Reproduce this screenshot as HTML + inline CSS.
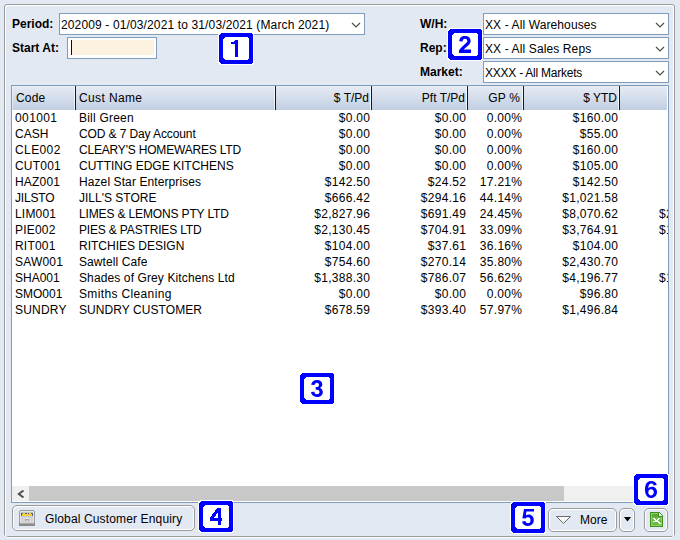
<!DOCTYPE html>
<html><head><meta charset="utf-8">
<style>
*{margin:0;padding:0;box-sizing:border-box}
html,body{width:680px;height:540px;overflow:hidden;background:#E3E9F3;font-family:"Liberation Sans",sans-serif;font-size:12px;color:#000}
.abs{position:absolute}
.panel{position:absolute;left:4px;top:4px;width:671px;height:533px;border:1px solid #9A9A9A;border-radius:3px}
.panelhi{position:absolute;left:5px;top:5px;width:669px;height:533px;border:1px solid #fff;border-radius:3px}
.lbl{position:absolute;font-weight:bold;font-size:12px;line-height:14px}
.combo{position:absolute;height:22px;background:#fff;border:1px solid #7F9DB9}
.combo .t{position:absolute;left:1px;top:4px;line-height:14px;white-space:nowrap}
.combo .chev{position:absolute;right:3px;top:8px}
.start{position:absolute;left:67px;top:37px;width:90px;height:22px;border:1px solid #7F9DB9;background:#fff}
.start .fill{position:absolute;left:4px;top:2px;right:2px;bottom:3px;background:#FDF2DF}
.start .caret{position:absolute;left:3px;top:2px;width:1px;height:15px;background:#0A0F1E}
.tbl{position:absolute;left:11px;top:85px;width:658px;height:418px;border:1px solid #7F9DB9;background:#fff;overflow:hidden}
.hdr{position:absolute;left:0;top:0;width:655px;height:24px;background:linear-gradient(#E6EBF4,#C1CFE2)}
.sep{position:absolute;top:0;width:1px;height:24px;background:#141A22;box-shadow:-1px 0 0 rgba(255,255,255,0.7)}
.h{position:absolute;top:86px;line-height:24px;white-space:nowrap}
.c{position:absolute;line-height:16px;white-space:nowrap}
.r{text-align:right}
.n{letter-spacing:0.3px;margin-right:-0.3px}
.badge{position:absolute}
.badge svg{position:absolute;left:0;top:0}
.badge span{position:absolute;left:0;top:0;width:34px;line-height:31px;text-align:center;font-weight:bold;font-size:23px;color:#0000FF}
.btn{position:absolute;border:1px solid #9A9A9A;border-radius:5px;background:#E3E9F3;box-shadow:inset 1px 1px 0 #fff, inset -1px -1px 0 #fff}
</style></head><body>
<div class="panel"></div>
<div class="panelhi"></div>

<div class="lbl" style="left:12px;top:17px">Period:</div>
<div class="combo" style="left:59px;top:13px;width:306px"><span class="t" style="letter-spacing:0.133px">202009 - 01/03/2021 to 31/03/2021 (March 2021)</span><svg class="chev" width="10" height="6" viewBox="0 0 10 6"><path d="M1 1L5 5L9 1" fill="none" stroke="#4A4A4A" stroke-width="1.15"/></svg></div>
<div class="lbl" style="left:12px;top:41px">Start At:</div>
<div class="start"><div class="fill"></div><div class="caret"></div></div>

<div class="lbl" style="left:420px;top:17px">W/H:</div>
<div class="combo" style="left:483px;top:13px;width:186px"><span class="t" style="letter-spacing:0.11px">XX - All Warehouses</span><svg class="chev" width="10" height="6" viewBox="0 0 10 6"><path d="M1 1L5 5L9 1" fill="none" stroke="#4A4A4A" stroke-width="1.15"/></svg></div>
<div class="lbl" style="left:420px;top:41px">Rep:</div>
<div class="combo" style="left:483px;top:37px;width:186px"><span class="t" style="letter-spacing:0.12px">XX - All Sales Reps</span><svg class="chev" width="10" height="6" viewBox="0 0 10 6"><path d="M1 1L5 5L9 1" fill="none" stroke="#4A4A4A" stroke-width="1.15"/></svg></div>
<div class="lbl" style="left:420px;top:65px">Market:</div>
<div class="combo" style="left:483px;top:61px;width:186px"><span class="t" style="letter-spacing:-0.24px">XXXX - All Markets</span><svg class="chev" width="10" height="6" viewBox="0 0 10 6"><path d="M1 1L5 5L9 1" fill="none" stroke="#4A4A4A" stroke-width="1.15"/></svg></div>

<div class="tbl">
 <div class="hdr"></div>
 <div class="abs" style="left:0;top:0;width:1px;height:24px;background:rgba(255,255,255,0.45)"></div>
 <div class="sep" style="left:63px"></div>
 <div class="sep" style="left:263px"></div>
 <div class="sep" style="left:359px"></div>
 <div class="sep" style="left:455px"></div>
 <div class="sep" style="left:511px"></div>
 <div class="sep" style="left:607px"></div>
 <div class="abs" style="left:0;top:400px;width:656px;height:15px;background:#F0F0F0"></div>
 <div class="abs" style="left:17px;top:400px;width:535px;height:15px;background:#C8C8C8"></div>
 <svg class="abs" style="left:5px;top:404px" width="8" height="8" viewBox="0 0 8 8"><path d="M6.5,0.5L1.8,4L6.5,7.5" fill="none" stroke="#505050" stroke-width="2"/></svg>
</div>
<div class="h" style="left:16px;letter-spacing:0.2px">Code</div>
<div class="h" style="left:79px;letter-spacing:0.375px">Cust Name</div>
<div class="h r" style="right:311px">$ T/Pd</div>
<div class="h r" style="right:215px">Pft T/Pd</div>
<div class="h r" style="right:160px;letter-spacing:0.25px;margin-right:-0.25px">GP %</div>
<div class="h r" style="right:63px">$ YTD</div>
<div class="c l" style="left:15px;top:110px;letter-spacing:0.400px">001001</div><div class="c l" style="left:79px;top:110px;letter-spacing:0.222px">Bill Green</div><div class="c r n" style="right:310px;top:110px">$0.00</div><div class="c r n" style="right:214px;top:110px">$0.00</div><div class="c r n" style="right:158px;top:110px">0.00%</div><div class="c r n" style="right:62px;top:110px">$160.00</div>
<div class="c l" style="left:15px;top:126px;letter-spacing:0.000px">CASH</div><div class="c l" style="left:79px;top:126px;letter-spacing:-0.111px">COD &amp; 7 Day Account</div><div class="c r n" style="right:310px;top:126px">$0.00</div><div class="c r n" style="right:214px;top:126px">$0.00</div><div class="c r n" style="right:158px;top:126px">0.00%</div><div class="c r n" style="right:62px;top:126px">$55.00</div>
<div class="c l" style="left:15px;top:142px;letter-spacing:0.400px">CLE002</div><div class="c l" style="left:79px;top:142px;letter-spacing:-0.190px">CLEARY'S HOMEWARES LTD</div><div class="c r n" style="right:310px;top:142px">$0.00</div><div class="c r n" style="right:214px;top:142px">$0.00</div><div class="c r n" style="right:158px;top:142px">0.00%</div><div class="c r n" style="right:62px;top:142px">$160.00</div>
<div class="c l" style="left:15px;top:158px;letter-spacing:0.200px">CUT001</div><div class="c l" style="left:79px;top:158px;letter-spacing:0.000px">CUTTING EDGE KITCHENS</div><div class="c r n" style="right:310px;top:158px">$0.00</div><div class="c r n" style="right:214px;top:158px">$0.00</div><div class="c r n" style="right:158px;top:158px">0.00%</div><div class="c r n" style="right:62px;top:158px">$105.00</div>
<div class="c l" style="left:15px;top:174px;letter-spacing:0.200px">HAZ001</div><div class="c l" style="left:79px;top:174px;letter-spacing:0.095px">Hazel Star Enterprises</div><div class="c r n" style="right:310px;top:174px">$142.50</div><div class="c r n" style="right:214px;top:174px">$24.52</div><div class="c r n" style="right:158px;top:174px">17.21%</div><div class="c r n" style="right:62px;top:174px">$142.50</div>
<div class="c l" style="left:15px;top:190px;letter-spacing:-0.200px">JILSTO</div><div class="c l" style="left:79px;top:190px;letter-spacing:0.000px">JILL'S STORE</div><div class="c r n" style="right:310px;top:190px">$666.42</div><div class="c r n" style="right:214px;top:190px">$294.16</div><div class="c r n" style="right:158px;top:190px">44.14%</div><div class="c r n" style="right:62px;top:190px">$1,021.58</div>
<div class="c l" style="left:15px;top:206px;letter-spacing:0.200px">LIM001</div><div class="c l" style="left:79px;top:206px;letter-spacing:-0.143px">LIMES &amp; LEMONS PTY LTD</div><div class="c r n" style="right:310px;top:206px">$2,827.96</div><div class="c r n" style="right:214px;top:206px">$691.49</div><div class="c r n" style="right:158px;top:206px">24.45%</div><div class="c r n" style="right:62px;top:206px">$8,070.62</div><div class="abs" style="left:620px;top:206px;width:48px;height:16px;overflow:hidden"><div class="c l n" style="left:39px;top:0">$2,000.00</div></div>
<div class="c l" style="left:15px;top:222px;letter-spacing:0.200px">PIE002</div><div class="c l" style="left:79px;top:222px;letter-spacing:-0.167px">PIES &amp; PASTRIES LTD</div><div class="c r n" style="right:310px;top:222px">$2,130.45</div><div class="c r n" style="right:214px;top:222px">$704.91</div><div class="c r n" style="right:158px;top:222px">33.09%</div><div class="c r n" style="right:62px;top:222px">$3,764.91</div><div class="abs" style="left:620px;top:222px;width:48px;height:16px;overflow:hidden"><div class="c l n" style="left:39px;top:0">$1,000.00</div></div>
<div class="c l" style="left:15px;top:238px;letter-spacing:0.200px">RIT001</div><div class="c l" style="left:79px;top:238px;letter-spacing:0.000px">RITCHIES DESIGN</div><div class="c r n" style="right:310px;top:238px">$104.00</div><div class="c r n" style="right:214px;top:238px">$37.61</div><div class="c r n" style="right:158px;top:238px">36.16%</div><div class="c r n" style="right:62px;top:238px">$104.00</div>
<div class="c l" style="left:15px;top:254px;letter-spacing:0.200px">SAW001</div><div class="c l" style="left:79px;top:254px;letter-spacing:0.091px">Sawtell Cafe</div><div class="c r n" style="right:310px;top:254px">$754.60</div><div class="c r n" style="right:214px;top:254px">$270.14</div><div class="c r n" style="right:158px;top:254px">35.80%</div><div class="c r n" style="right:62px;top:254px">$2,430.70</div>
<div class="c l" style="left:15px;top:270px;letter-spacing:0.000px">SHA001</div><div class="c l" style="left:79px;top:270px;letter-spacing:0.115px">Shades of Grey Kitchens Ltd</div><div class="c r n" style="right:310px;top:270px">$1,388.30</div><div class="c r n" style="right:214px;top:270px">$786.07</div><div class="c r n" style="right:158px;top:270px">56.62%</div><div class="c r n" style="right:62px;top:270px">$4,196.77</div><div class="abs" style="left:620px;top:270px;width:48px;height:16px;overflow:hidden"><div class="c l n" style="left:39px;top:0">$1,000.00</div></div>
<div class="c l" style="left:15px;top:286px;letter-spacing:0.000px">SMO001</div><div class="c l" style="left:79px;top:286px;letter-spacing:0.357px">Smiths Cleaning</div><div class="c r n" style="right:310px;top:286px">$0.00</div><div class="c r n" style="right:214px;top:286px">$0.00</div><div class="c r n" style="right:158px;top:286px">0.00%</div><div class="c r n" style="right:62px;top:286px">$96.80</div>
<div class="c l" style="left:15px;top:302px;letter-spacing:0.200px">SUNDRY</div><div class="c l" style="left:79px;top:302px;letter-spacing:0.071px">SUNDRY CUSTOMER</div><div class="c r n" style="right:310px;top:302px">$678.59</div><div class="c r n" style="right:214px;top:302px">$393.40</div><div class="c r n" style="right:158px;top:302px">57.97%</div><div class="c r n" style="right:62px;top:302px">$1,496.84</div>

<div class="btn" style="left:12px;top:505px;width:183px;height:26px"></div>
<svg class="abs" style="left:19px;top:510px" width="16" height="16" viewBox="0 0 16 16" shape-rendering="crispEdges">
 <path d="M1,0H15V1H16V16H0V1H1Z" fill="#9C9C9C"/>
 <rect x="1" y="1" width="14" height="14" fill="#E4E4E4"/>
 <rect x="2" y="2" width="12" height="1" fill="#C4C4C4"/>
 <rect x="2" y="3" width="12" height="3" fill="#56617A"/>
 <path d="M3,6V4H4V3H6V4H8V3H9V4H10V3H12V4H13V6Z" fill="#F3D338"/><rect x="9" y="4" width="1" height="1" fill="#E8A030"/>
 <rect x="2" y="6" width="12" height="1" fill="#BCCADF"/>
 <rect x="2" y="7" width="12" height="6" fill="#D4D4D4"/>
 <path d="M6,11V9H7V8H9V9H10V11H9V10H7V11Z" fill="#AAAAAA"/>
 <rect x="6" y="8" width="4" height="1" fill="#E6E6E6"/>
 <rect x="0" y="13" width="16" height="3" fill="#8A8A8A"/>
 <rect x="1" y="13" width="14" height="1" fill="#A8A8A8"/>
</svg>
<div class="c" style="left:45px;top:511px;letter-spacing:0.14px">Global Customer Enquiry</div>

<div class="btn" style="left:548px;top:508px;width:69px;height:24px"></div>
<svg class="abs" style="left:555px;top:515px" width="17" height="10" viewBox="0 0 17 10">
 <defs><linearGradient id="tg" x1="0" y1="0" x2="0" y2="1"><stop offset="0" stop-color="#FFFFFF"/><stop offset="1" stop-color="#E8E8E8"/></linearGradient></defs>
 <path d="M1.5,1.5H15.5L8.5,8.5Z" fill="url(#tg)" stroke="#6A6A6A" stroke-width="1" stroke-linejoin="miter"/>
</svg>
<div class="c" style="left:580px;top:512px">More</div>
<div class="btn" style="left:619px;top:508px;width:16px;height:24px"></div>
<svg class="abs" style="left:624px;top:517px" width="7" height="5" viewBox="0 0 7 5"><path d="M0,0H7L3.5,4.5Z" fill="#000"/></svg>
<div class="btn" style="left:644px;top:508px;width:24px;height:24px"></div>
<svg class="abs" style="left:650px;top:512px" width="13" height="15" viewBox="0 0 13 15" shape-rendering="crispEdges">
 <path d="M0,0H9L13,4V15H0Z" fill="#3E8D1F"/>
 <path d="M1,1H8.6L12,4.4V14H1Z" fill="#8DD262"/>
 <path d="M2,2H8V4H11V13H2Z" fill="#6CBB43"/>
 <rect x="2" y="2" width="6" height="3" fill="#5DA836"/>
 <path d="M8,1H9L12,4V5H8Z" fill="#3E8D1F"/>
 <path d="M9,1L12,4H9Z" fill="#F4F4F4"/>
 <path d="M3,6H5V7H6V8H7V7H8V6H10V7H9V8H8V9H9V10H10V11H11V12H9V11H8V10H3V9H5V8H4V7H3Z" fill="#fff"/>
</svg>

<svg class="badge" style="left:218px;top:32px" width="36" height="33" viewBox="-1 -1 36 33"><path d="M1 -1H33L35 1V30L33 32H1L-1 30V1Z" fill="#fff" shape-rendering="crispEdges"/><path d="M2 0H32L34 2V29L32 31H2L0 29V2Z" fill="#0000FF" shape-rendering="crispEdges"/><path d="M6 4H28L30 6V25L28 27H6L4 25V6Z" fill="#fff" shape-rendering="crispEdges"/><g transform="translate(11,7)"><path d="M5,0H8V17H5Z M1,2H5V4H1Z M4,1H5V2H4Z" fill="#0000FF" shape-rendering="crispEdges"/></g></svg>
<svg class="badge" style="left:447px;top:28px" width="36" height="33" viewBox="-1 -1 36 33"><path d="M1 -1H33L35 1V30L33 32H1L-1 30V1Z" fill="#fff" shape-rendering="crispEdges"/><path d="M2 0H32L34 2V29L32 31H2L0 29V2Z" fill="#0000FF" shape-rendering="crispEdges"/><path d="M6 4H28L30 6V25L28 27H6L4 25V6Z" fill="#fff" shape-rendering="crispEdges"/><g transform="translate(11,7)"><path d="M0.3,5.3 C0.4,1.8 2.6,0 6,0 C9.4,0 11.6,2 11.6,4.9 C11.6,7 10.5,8.3 8.3,10.2 L4.6,13.6 H12 V17 H0 V14.3 C0.4,13.4 1.6,12 3.9,9.9 C7.3,6.8 8.3,6.2 8.3,4.9 C8.3,3.6 7.3,2.7 6,2.7 C4.5,2.7 3.6,3.7 3.5,5.6 Z" fill="#0000FF"/></g></svg>
<svg class="badge" style="left:299px;top:372px" width="36" height="33" viewBox="-1 -1 36 33"><path d="M1 -1H33L35 1V30L33 32H1L-1 30V1Z" fill="#fff" shape-rendering="crispEdges"/><path d="M2 0H32L34 2V29L32 31H2L0 29V2Z" fill="#0000FF" shape-rendering="crispEdges"/><path d="M6 4H28L30 6V25L28 27H6L4 25V6Z" fill="#fff" shape-rendering="crispEdges"/><g transform="translate(11,7)"><path d="M0.2,4.8 C0.6,1.7 2.8,0 6,0 C9.3,0 11.3,1.9 11.3,4.3 C11.3,6 10.3,7.3 8.9,8.1 C10.7,8.7 11.8,10.2 11.8,12.2 C11.8,15.1 9.4,17 6,17 C2.6,17 0.3,15.2 0,12.1 L3.3,11.8 C3.5,13.5 4.5,14.3 6,14.3 C7.5,14.3 8.5,13.3 8.5,12 C8.5,10.6 7.5,9.7 5.8,9.7 H4.7 V7.1 H5.7 C7.2,7.1 8,6.3 8,5 C8,3.7 7.2,2.7 6,2.7 C4.7,2.7 3.7,3.6 3.5,5.1 Z" fill="#0000FF"/></g></svg>
<svg class="badge" style="left:198px;top:500px" width="36" height="33" viewBox="-1 -1 36 33"><path d="M1 -1H33L35 1V30L33 32H1L-1 30V1Z" fill="#fff" shape-rendering="crispEdges"/><path d="M2 0H32L34 2V29L32 31H2L0 29V2Z" fill="#0000FF" shape-rendering="crispEdges"/><path d="M6 4H28L30 6V25L28 27H6L4 25V6Z" fill="#fff" shape-rendering="crispEdges"/><g transform="translate(11,7)"><path fill-rule="evenodd" d="M7,0H11V10H12V13H11V17H8V13H0V10Z M8,4.5V10H3.6Z" fill="#0000FF" shape-rendering="crispEdges"/></g></svg>
<svg class="badge" style="left:510px;top:501px" width="36" height="33" viewBox="-1 -1 36 33"><path d="M1 -1H33L35 1V30L33 32H1L-1 30V1Z" fill="#fff" shape-rendering="crispEdges"/><path d="M2 0H32L34 2V29L32 31H2L0 29V2Z" fill="#0000FF" shape-rendering="crispEdges"/><path d="M6 4H28L30 6V25L28 27H6L4 25V6Z" fill="#fff" shape-rendering="crispEdges"/><g transform="translate(11,7)"><path d="M2,0 H12 V2.4 H4.4 L3.9,6.4 C4.7,5.9 5.7,5.6 6.7,5.6 C9.8,5.6 11.8,8 11.8,11.1 C11.8,14.6 9.4,17 6,17 C2.8,17 0.5,15.2 0.1,12.4 L3.4,12.1 C3.7,13.5 4.7,14.3 6,14.3 C7.5,14.3 8.5,13 8.5,11.2 C8.5,9.4 7.5,8.3 6,8.3 C5,8.3 4.1,8.8 3.5,9.5 L0.4,9.3 Z" fill="#0000FF"/></g></svg>
<svg class="badge" style="left:633px;top:473px" width="36" height="33" viewBox="-1 -1 36 33"><path d="M1 -1H33L35 1V30L33 32H1L-1 30V1Z" fill="#fff" shape-rendering="crispEdges"/><path d="M2 0H32L34 2V29L32 31H2L0 29V2Z" fill="#0000FF" shape-rendering="crispEdges"/><path d="M6 4H28L30 6V25L28 27H6L4 25V6Z" fill="#fff" shape-rendering="crispEdges"/><g transform="translate(11,7)"><path fill-rule="evenodd" d="M6,0 C2.5,0 0,2.7 0,8.6 C0,14.2 2.5,17 6,17 C9.5,17 12,14.5 12,11 C12,7.8 9.8,5.8 7,5.8 C5.3,5.8 4,6.5 3.2,7.5 C3.4,4.2 4.5,2.6 6.2,2.6 C7.5,2.6 8.3,3.2 8.7,4.4 L11.8,4 C11.2,1.5 9,0 6,0 Z M6,8.3 C4.5,8.3 3.3,9.5 3.3,11.3 C3.3,13.2 4.4,14.4 6,14.4 C7.6,14.4 8.8,13.3 8.8,11.3 C8.8,9.4 7.6,8.3 6,8.3 Z" fill="#0000FF"/></g></svg>
</body></html>
